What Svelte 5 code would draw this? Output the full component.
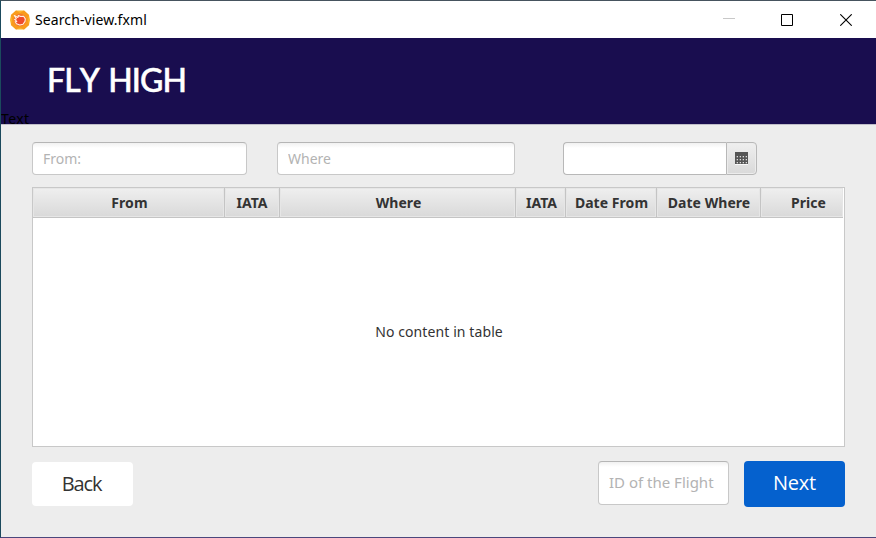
<script>
  const columns = [
    { label: 'From', width: 192, shift: 2 },
    { label: 'IATA', width: 55 },
    { label: 'Where', width: 236, shift: 2 },
    { label: 'IATA', width: 50, shift: 2 },
    { label: 'Date From', width: 91, shift: 1 },
    { label: 'Date Where', width: 104, shift: 1 },
    { label: 'Price', width: 83, shift: 13 }
  ];
</script>

<div class="window">
  <header class="titlebar">
    <svg class="logo" width="20" height="20" viewBox="0 0 20 20">
      <path d="M6 .5h8l5 4.5 1 5-1 5-5 4.5H6L1 15 0 10l1-5z" fill="#fbb52b" />
      <path d="M1 5l5-4.5L10 3l4-2.5L19 5l-1 5 1 5-5 4.5-4-2-4 2L1 15l1-5z" fill="#f99b1c" />
      <circle cx="10" cy="10" r="6.3" fill="#f57a2c" />
      <path d="M4.3 5.5l3.6 2 .5-2 2.2 1 3-.2 1.7 2.6-.3 2.5-2 2.8-3.2.8-3.3-1.2-1.3-2 1.6-.4-2.2-2 1.8-.6z" fill="#ef4b2c" stroke="#fff0df" stroke-width="1.1" stroke-linejoin="round" />
    </svg>
    <span class="caption">Search-view.fxml</span>
    <div class="controls">
      <svg width="12" height="12" viewBox="0 0 12 12"><path d="M0 4.5h12" stroke="#c8c8c8" /></svg>
      <svg width="12" height="12" viewBox="0 0 12 12"><path d="M.5.5h11v11H.5z" fill="none" stroke="#000" /></svg>
      <svg width="12" height="12" viewBox="0 0 12 12"><path d="M.3.3l11.4 11.4M11.7.3L.3 11.7" stroke="#000" stroke-width="1.1" /></svg>
    </div>
  </header>

  <div class="banner">
    <h1>FLY HIGH</h1>
    <span class="stray">Text</span>
  </div>

  <main>
    <div class="filters">
      <input class="field from" placeholder="From:" />
      <input class="field where" placeholder="Where" />
      <div class="date">
        <input class="field" aria-label="Date" />
        <button aria-label="Open calendar">
          <svg width="13" height="13" viewBox="0 0 13 13">
            <path d="M0 0h13v12H0z" fill="#555" />
            <path d="M0 12.5h13" stroke="#fff" opacity=".8" />
            <g fill="#ddd">
              {#each [4, 7, 10] as y}
                {#each [2, 5, 8, 11] as x}
                  <rect x={x - 0.3} y={y} width="1.3" height="1.3" />
                {/each}
              {/each}
            </g>
          </svg>
        </button>
      </div>
    </div>

    <section class="table">
      <div class="head">
        {#each columns as column}
          <div class="col" style:width="{column.width}px" style:padding-left="{column.shift ?? 0}px">{column.label}</div>
        {/each}
      </div>
      <div class="empty">No content in table</div>
    </section>

    <footer>
      <button class="back">Back</button>
      <input class="field flight" placeholder="ID of the Flight" />
      <button class="next">Next</button>
    </footer>
  </main>
</div>

<style>
  .window {
    box-sizing: border-box;
    width: 876px;
    height: 538px;
    border: solid;
    border-width: 1px 0 1px 1px;
    border-color: #46545e #46545e #4b477c #1b4a5d;
    background: #ededed;
    font-family: "Noto Sans", "Open Sans", sans-serif;
    display: flex;
    flex-direction: column;
    overflow: hidden;
  }
  input, button {
    box-sizing: border-box;
    font-family: inherit;
    margin: 0;
    outline: none;
  }
  .titlebar {
    height: 37px;
    flex: none;
    display: flex;
    align-items: center;
    padding: 0 24px 0 9px;
    background: #fff;
  }
  .caption {
    margin-left: 5px;
    font-size: 14px;
    letter-spacing: 0.1px;
    line-height: 20px;
    color: #000;
  }
  .controls {
    display: flex;
    gap: 47px;
    margin-left: auto;
  }
  .controls svg:first-child { margin-right: -1px; }
  .controls svg, .logo { display: block; }
  .banner {
    box-sizing: border-box;
    height: 87px;
    flex: none;
    background: #190d4f;
    display: flex;
    flex-direction: column;
    justify-content: space-between;
  }
  h1 {
    margin: 22px 0 0 46px;
    font: 500 32px/40px Lato, sans-serif;
    font-kerning: none;
    letter-spacing: -0.9px;
    word-spacing: 2px;
    -webkit-text-stroke: 0.5px #fff;
    color: #fff;
  }
  .stray {
    font-size: 14px;
    line-height: 14px;
    height: 13px;
    letter-spacing: 0.4px;
    color: #000;
  }
  main {
    flex: 1;
    padding: 17px 31px 0 31px;
    display: flex;
    flex-direction: column;
    border-top: 1px solid #c0bec9;
    margin-top: -1px;
  }
  .filters {
    display: flex;
    height: 33px;
    flex: none;
  }
  .field {
    border: 1px solid #c8c8c8;
    border-top-color: #b5b5b5;
    border-radius: 4px;
    background: linear-gradient(#f1f1f1, #fff 5px);
    padding: 0 0 1px 10px;
    font-size: 14px;
    color: #333;
  }
  .field::placeholder { color: #b3b3b3; opacity: 1; }
  .from { width: 215px; }
  .where { width: 238px; margin-left: 30px; }
  .date {
    display: flex;
    width: 194px;
    margin-left: 48px;
  }
  .date .field {
    width: 163px;
    border-color: #b8b8b8;
    border-right: 0;
    border-radius: 4px 0 0 4px;
  }
  .date button {
    width: 31px;
    border: 1px solid #b8b8b8;
    border-radius: 0 4px 4px 0;
    background: linear-gradient(#efefef, #d9d9d9);
    box-shadow: inset 0 0 0 1px #ececec;
    padding: 0;
    display: flex;
    align-items: center;
    justify-content: center;
  }
  .table {
    box-sizing: border-box;
    width: 813px;
    height: 260px;
    flex: none;
    margin-top: 12px;
    border: 1px solid #c8c8c8;
    background: #fff;
    display: flex;
    flex-direction: column;
  }
  .head {
    display: flex;
    height: 30px;
    flex: none;
  }
  .col {
    box-sizing: border-box;
    flex: none;
    border-right: 1px solid #c4c4c4;
    border-bottom: 1px solid #c4c4c4;
    background: linear-gradient(#efefef, #d9d9d9);
    box-shadow: inset 0 0 0 1px #e6e6e6, inset 0 1px #fafafa;
    text-align: center;
    font-size: 14px;
    font-weight: 700;
    letter-spacing: 0.05px;
    line-height: 30px;
    color: #333;
    white-space: nowrap;
  }
  .col:last-child { border-right: 0; margin-right: 1px; flex: 0 1 auto; }
  .empty {
    flex: 1;
    display: flex;
    align-items: center;
    justify-content: center;
    padding: 0 0 1px 1px;
    font-size: 14px;
    letter-spacing: 0.1px;
    color: #333;
  }
  footer {
    display: flex;
    margin-top: 14px;
    align-items: flex-start;
  }
  footer button {
    border: 0;
    border-radius: 4px;
    font-family: "Open Sans", sans-serif;
    font-size: 20px;
  }
  .back {
    width: 101px;
    height: 44px;
    margin-top: 1px;
    padding: 0 2px 2px 0;
    letter-spacing: -1.1px;
    background: #fff;
    color: #333;
  }
  .field.flight {
    width: 131px;
    height: 44px;
    margin-left: auto;
    padding-bottom: 2px;
    font-size: 15px;
  }
  .next {
    width: 101px;
    height: 46px;
    margin-left: 15px;
    padding: 0 0 3px;
    letter-spacing: -0.2px;
    background: #0561ce;
    color: #fff;
  }
</style>
